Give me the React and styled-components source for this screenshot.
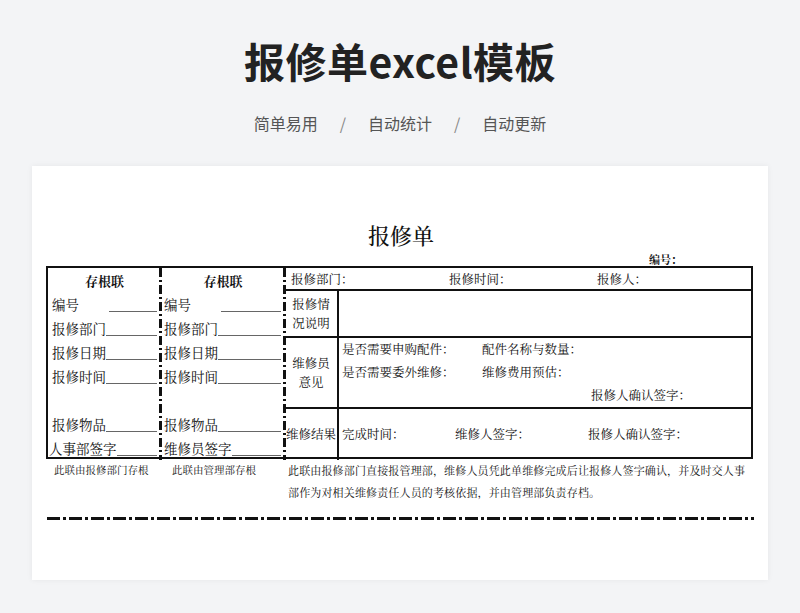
import React from "react";
import styled, { createGlobalStyle } from "styled-components";

const G = createGlobalStyle`
  body{margin:0;background:#f3f4f6;font-family:"Noto Sans CJK SC","Noto Sans",sans-serif;}
`;
const Page = styled.div`width:800px;height:613px;display:flex;flex-direction:column;align-items:center;`;
const Title = styled.h1`margin:34px 0 0;font-size:41px;font-weight:700;color:#222;line-height:52px;letter-spacing:0.5px;`;
const Sub = styled.div`margin-top:26px;font-size:16px;color:#555;display:flex;gap:22px;line-height:22px;`;
const Slash = styled.span`color:#888;`;
const Card = styled.div`margin-top:32px;width:736px;height:414px;background:#fff;box-shadow:0 0 6px rgba(0,0,0,0.06);
  display:flex;flex-direction:column;padding:52px 14px 0;box-sizing:border-box;font-family:"Noto Serif CJK SC","Noto Sans CJK SC",serif;color:#111;`;
const FormTitle = styled.div`text-align:center;font-size:22px;font-weight:500;line-height:34px;margin-left:2px;`;
const NoLine = styled.div`text-align:right;font-size:11px;font-weight:700;padding-right:72px;line-height:14px;`;
const Table = styled.div`width:707px;height:193px;border:2px solid #111;box-sizing:border-box;display:grid;grid-template-columns:113px 124px 1fr;`;
const Stub = styled.div`display:flex;flex-direction:column;position:relative;
  ${p=>p.dash&&`&:after{content:"";position:absolute;right:-1px;top:0;bottom:0;width:3px;
  background:repeating-linear-gradient(to bottom,#111 0 9px,transparent 9px 12px,#111 12px 14px,transparent 14px 17px);}`}`;
const StubHead = styled.div`height:24px;display:flex;align-items:center;justify-content:center;font-size:13px;font-weight:700;`;
const StubRow = styled.div`height:24px;display:flex;align-items:center;font-size:13.5px;padding-left:${p=>p.pl||4}px;margin-top:${p=>p.mt||0}px;`;
const Blank = styled.span`flex:1;height:15px;border-bottom:1px solid #666;margin-right:4px;margin-left:${p=>p.ml||0}px;`;
const Right = styled.div`display:grid;grid-template-columns:54px 1fr;grid-template-rows:23px 47px 71px 1fr;`;
const HeadRow = styled.div`grid-column:1/3;display:flex;align-items:center;font-size:12.5px;padding-left:6px;border-bottom:2px solid #111;`;
const Cell = styled.div`border-bottom:${p=>p.last?0:2}px solid #111;border-right:${p=>p.label?2:0}px solid #111;
  display:flex;flex-direction:column;justify-content:center;align-items:${p=>p.label?"center":"stretch"};font-size:12.5px;line-height:19px;text-align:center;white-space:nowrap;`;
const Line = styled.div`display:flex;font-size:12.5px;line-height:23px;text-align:left;padding-left:${p=>p.pl||3}px;`;
const Span = styled.span`width:${p=>p.w}px;`;
const Notes = styled.div`display:grid;grid-template-columns:114px 124px 1fr;font-size:10.5px;line-height:22px;margin-top:0;`;
const Wide = styled.span`padding-left:4px;font-size:11px;letter-spacing:0.15px;`;
const Cut = styled.div`margin-top:14px;margin-left:1px;width:707px;height:3px;
  background:repeating-linear-gradient(to right,#111 0 13px,transparent 13px 16px,#111 16px 19px,transparent 19px 22px);`;

export default function App(){
  return <><G/><Page>
    <Title>报修单excel模板</Title>
    <Sub><span>简单易用</span><Slash>/</Slash><span>自动统计</span><Slash>/</Slash><span>自动更新</span></Sub>
    <Card>
      <FormTitle>报修单</FormTitle>
      <NoLine>编号：</NoLine>
      <Table>
        <Stub dash>
          <StubHead>存根联</StubHead>
          <StubRow>编号<Blank ml={30}/></StubRow>
          <StubRow>报修部门<Blank/></StubRow>
          <StubRow>报修日期<Blank/></StubRow>
          <StubRow>报修时间<Blank/></StubRow>
          <StubRow mt={24}>报修物品<Blank/></StubRow>
          <StubRow pl={1}>人事部签字<Blank/></StubRow>
        </Stub>
        <Stub dash>
          <StubHead>存根联</StubHead>
          <StubRow pl={3}>编号<Blank ml={30}/></StubRow>
          <StubRow pl={3}>报修部门<Blank/></StubRow>
          <StubRow pl={3}>报修日期<Blank/></StubRow>
          <StubRow pl={3}>报修时间<Blank/></StubRow>
          <StubRow pl={3} mt={24}>报修物品<Blank/></StubRow>
          <StubRow pl={3}>维修员签字<Blank/></StubRow>
        </Stub>
        <Right>
          <HeadRow><Span w={158}>报修部门：</Span><Span w={148}>报修时间：</Span><span>报修人：</span></HeadRow>
          <Cell label>报修情<br/>况说明</Cell>
          <Cell/>
          <Cell label>维修员<br/>意见</Cell>
          <Cell>
            <Line><Span w={140}>是否需要申购配件：</Span>配件名称与数量：</Line>
            <Line><Span w={140}>是否需要委外维修：</Span>维修费用预估：</Line>
            <Line pl={252}>报修人确认签字：</Line>
          </Cell>
          <Cell label last>维修结果</Cell>
          <Cell last><Line><Span w={113}>完成时间：</Span><Span w={133}>维修人签字：</Span>报修人确认签字：</Line></Cell>
        </Right>
      </Table>
      <Notes>
        <span style={{paddingLeft:8}}>此联由报修部门存根</span>
        <span style={{paddingLeft:12}}>此联由管理部存根</span>
        <Wide>此联由报修部门直接报管理部，维修人员凭此单维修完成后让报修人签字确认，并及时交人事部作为对相关维修责任人员的考核依据，并由管理部负责存档。</Wide>
      </Notes>
      <Cut/>
    </Card>
  </Page></>;
}
